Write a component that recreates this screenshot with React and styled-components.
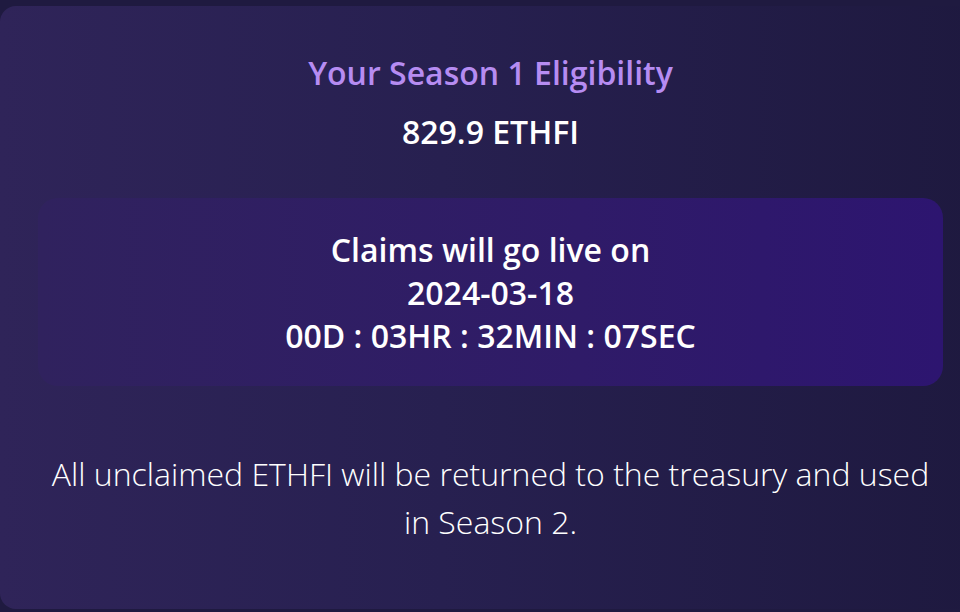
import React from 'react';
import styled, { createGlobalStyle } from 'styled-components';

const GlobalStyle = createGlobalStyle`
  html, body {
    margin: 0;
    padding: 0;
    overflow: hidden;
    background: #1f1a40;
  }
  body {
    font-family: 'Open Sans', 'Noto Sans', sans-serif;
    -webkit-font-smoothing: antialiased;
  }
`;

const Page = styled.div`
  width: 960px;
  height: 612px;
  padding-top: 6px;
  box-sizing: border-box;
  overflow: hidden;
`;

const Card = styled.section`
  width: 980px;
  height: 603px;
  box-sizing: border-box;
  padding: 45px 37px 0 38px;
  border-radius: 16px;
  background: linear-gradient(90deg, #2f2459 0%, #272050 45%, #1e193f 100%);
  display: flex;
  flex-direction: column;
  align-items: center;
`;

const Title = styled.h2`
  margin: 0;
  font-size: 32px;
  line-height: 44px;
  font-weight: 600;
  color: #b68cf2;
`;

const Amount = styled.div`
  margin-top: 15px;
  font-size: 32px;
  line-height: 44px;
  font-weight: 600;
  color: #ffffff;
`;

const ClaimBox = styled.div`
  margin-top: 44px;
  width: 100%;
  height: 188px;
  box-sizing: border-box;
  border-radius: 20px;
  background: linear-gradient(90deg, #30225e 0%, #2f1b68 60%, #2d1570 100%);
  display: flex;
  flex-direction: column;
  align-items: center;
  justify-content: center;
`;

const ClaimLine = styled.div`
  font-size: 32px;
  line-height: 43px;
  font-weight: 600;
  color: #ffffff;
`;

const Note = styled.p`
  margin: 64px 0 0;
  font-size: 32px;
  line-height: 48px;
  font-weight: 300;
  color: #ffffff;
  text-align: center;
  max-width: 900px;
`;

export default function App() {
  return (
    <>
      <GlobalStyle />
      <Page>
        <Card>
          <Title>Your Season 1 Eligibility</Title>
          <Amount>829.9 ETHFI</Amount>
          <ClaimBox>
            <ClaimLine>Claims will go live on</ClaimLine>
            <ClaimLine>2024-03-18</ClaimLine>
            <ClaimLine>00D : 03HR : 32MIN : 07SEC</ClaimLine>
          </ClaimBox>
          <Note>
            All unclaimed ETHFI will be returned to the treasury and used in Season 2.
          </Note>
        </Card>
      </Page>
    </>
  );
}
